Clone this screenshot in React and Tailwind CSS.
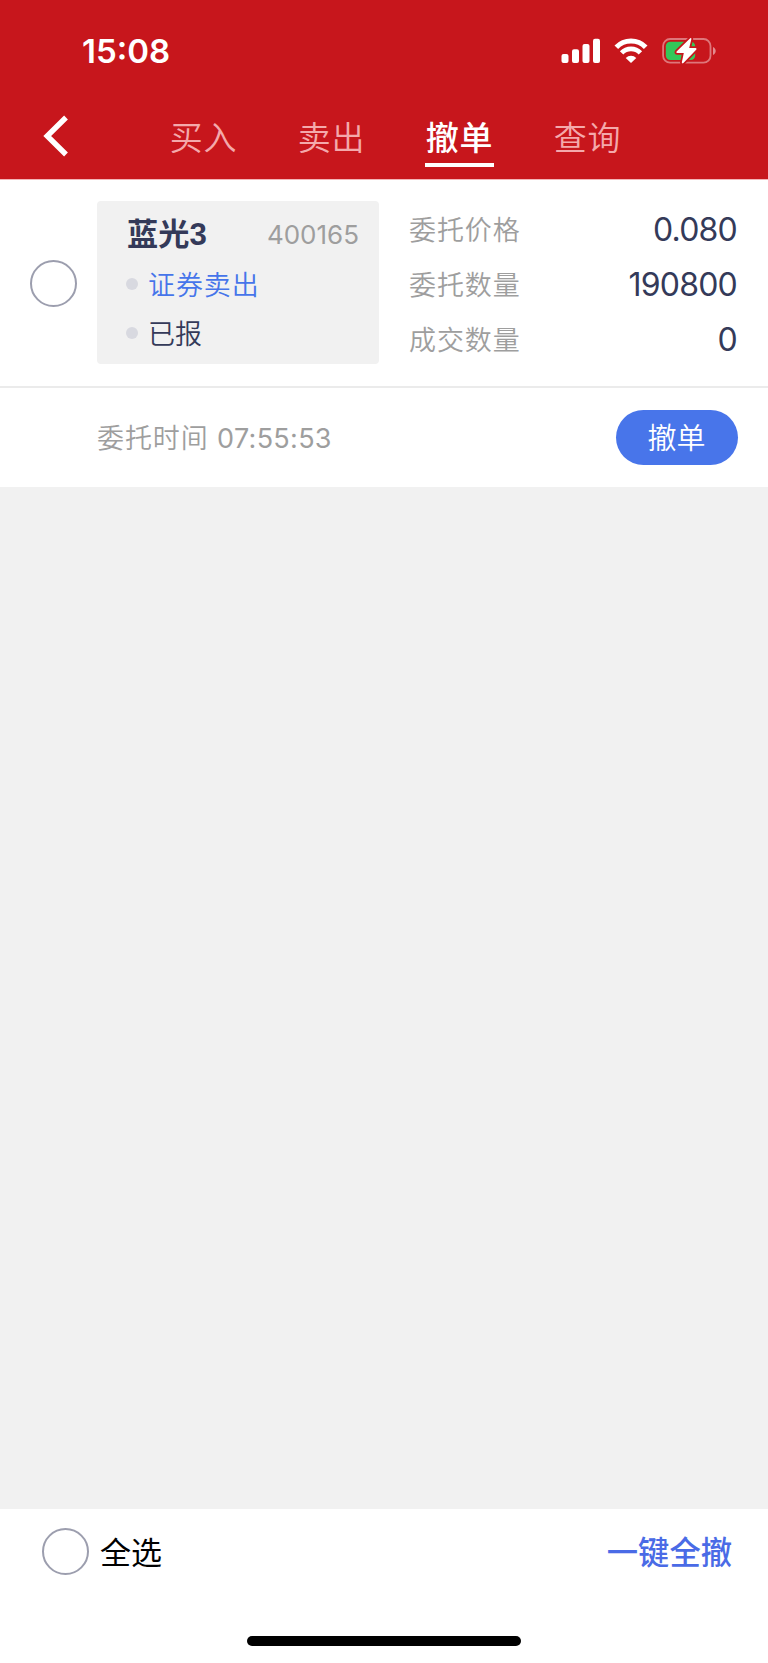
const tabs = [
  { id: 'buy', label: '买入' },
  { id: 'sell', label: '卖出' },
  { id: 'cancel', label: '撤单' },
  { id: 'query', label: '查询' },
]

const details = [
  { label: '委托价格', value: '0.080' },
  { label: '委托数量', value: '190800' },
  { label: '成交数量', value: '0' },
]

function SignalIcon() {
  return (
    <svg width="40" height="26" viewBox="0 0 40 26" fill="#fff">
      <rect x="0.5" y="16" width="7" height="9" rx="2" />
      <rect x="11" y="11.3" width="7" height="13.7" rx="2" />
      <rect x="21.5" y="6" width="7" height="19" rx="2" />
      <rect x="32" y="0.8" width="7" height="24.2" rx="2" />
    </svg>
  )
}

function WifiIcon() {
  return (
    <svg width="34" height="26" viewBox="0 0 34 26" fill="none">
      <path d="M2.3 9.3 A20.4 20.4 0 0 1 31.7 9.3" stroke="#fff" strokeWidth="5" />
      <path d="M7.6 14.8 A13 13 0 0 1 26.4 14.8" stroke="#fff" strokeWidth="4.8" />
      <path d="M17 25 L11.7 19.9 A7.8 7.8 0 0 1 22.3 19.9 Z" fill="#fff" />
    </svg>
  )
}

function BatteryIcon() {
  return (
    <svg width="55" height="30" viewBox="0 0 55 30" fill="none">
      <rect x="1.1" y="3" width="47.4" height="23.7" rx="7" stroke="#fff" strokeOpacity="0.42" strokeWidth="1.8" />
      <path d="M51 11 C54.6 12.4 54.6 17.6 51 19 Z" fill="#fff" fillOpacity="0.5" />
      <rect x="3.8" y="5.8" width="29.4" height="18.2" rx="4.4" fill="#34c759" />
      <path
        d="M28.2 2.2 L14.6 15.5 Q13.8 17 15.4 17 H21.8 L19.8 26.6 Q20.2 28 21.4 27 L34.4 13.6 Q35 12.2 33.6 12.1 H27.2 L29.4 3 Q29.4 1.6 28.2 2.2 Z"
        fill="#fff"
        stroke="#c7161c"
        strokeWidth="3.6"
        paintOrder="stroke"
      />
    </svg>
  )
}

function Radio() {
  return <span className="block size-[47px] rounded-full border-2 border-[#9c9eae] bg-white shrink-0" />
}

function StatusBar() {
  return (
    <div className="flex h-[95px] items-start justify-between pl-[82px] pr-[51px]">
      <span className="mt-[33px] text-[33px] leading-[36px] font-semibold text-white">15:08</span>
      <div className="mt-[36px] flex items-center">
        <SignalIcon />
        <span className="ml-[13px]"><WifiIcon /></span>
        <span className="ml-[14px]"><BatteryIcon /></span>
      </div>
    </div>
  )
}

function NavBar({ active }) {
  return (
    <div className="flex h-[84px]">
      <button className="ml-[43px] mt-[20px] h-[42px] w-[26px]">
        <svg width="26" height="42" viewBox="0 0 26 42" fill="none">
          <path d="M23 2.5 L4.2 21 L23 39.5" stroke="#fff" strokeWidth="5.4" />
        </svg>
      </button>
      <div className="ml-[100px] flex gap-[59px]">
        {tabs.map((tab) => (
          <button
            key={tab.id}
            className={`flex h-[72px] w-[69px] flex-col items-center pt-[21px] text-[33px] leading-[44px] tracking-[0.8px] ${
              tab.id === active
                ? 'border-b-4 border-white font-medium text-white'
                : 'font-[350] text-[#f4a9ab]'
            }`}
          >
            {tab.label}
          </button>
        ))}
      </div>
    </div>
  )
}

export default function App() {
  return (
    <div className="flex h-[1663px] w-[768px] flex-col overflow-hidden bg-[#f1f1f1] font-[Inter,'Noto_Sans_CJK_SC',sans-serif]">
      <header className="bg-[#c7161c]">
        <StatusBar />
        <NavBar active="cancel" />
      </header>

      <section className="h-[308px] border-t border-[#f3b5b7] bg-white">
        <div className="flex h-[208px] items-start border-b-2 border-[#ebebeb] pl-[30px] pr-[31px]">
          <div className="mt-[80px]"><Radio /></div>

          {/* Stock card */}
          <div className="ml-[20px] mt-[21px] h-[163px] w-[282px] rounded bg-[#f1f1f1] pl-[30px] pr-[20px] pt-[12px]">
            <div className="flex h-[44px] items-center justify-between">
              <span className="pt-px font-['Liberation_Sans','Noto_Sans_CJK_SC',sans-serif] text-[31.2px] font-bold text-[#343a59]">蓝光3</span>
              <span className="h-[44px] text-[26px] leading-[44px] text-[#9e9e9e]">400165</span>
            </div>
            <div className="-ml-px flex h-[54px] items-center gap-[10px]">
              <span className="size-3 rounded-full bg-[#d8d9e0]" />
              <span className="pt-[4px] text-[27px] font-[350] tracking-[0.9px] text-[#4675ea]">证券卖出</span>
            </div>
            <div className="-ml-px flex h-[44px] items-center gap-[10px]">
              <span className="size-3 rounded-full bg-[#d8d9e0]" />
              <span className="pt-[4px] text-[27px] font-[350] text-[#343a59]">已报</span>
            </div>
          </div>

          {/* Order details */}
          <div className="ml-[30px] mt-[21px] flex-1">
            {details.map((d) => (
              <div key={d.label} className="flex h-[55px] items-center justify-between">
                <span className="pt-[5px] text-[27px] font-[350] tracking-[0.9px] text-[#9e9e9e]">{d.label}</span>
                <span className="pt-[2px] text-[32px] tracking-[-0.8px] text-[#343a59]">{d.value}</span>
              </div>
            ))}
          </div>
        </div>

        <div className="flex h-[99px] items-center justify-between pl-[97px] pr-[30px]">
          <span className="pt-[3px] text-[27px] font-[350] tracking-[0.9px] text-[#9e9e9e]">
            委托时间 <span className="font-normal tracking-[0.3px]">07:55:53</span>
          </span>
          <button className="h-[55px] w-[122px] rounded-full bg-[#4875ea] pt-[3px] pr-[1px] text-[29px] font-[350] text-white">撤单</button>
        </div>
      </section>

      <main className="flex-1" />

      <footer className="flex h-[154px] flex-col items-center bg-white">
        <div className="flex h-[85px] w-full items-center justify-between pl-[42px] pr-[36px]">
          <label className="flex items-center gap-[11px] text-[31px] text-black">
            <Radio />
            <span className="pt-[4px]">全选</span>
          </label>
          <button className="pt-[4px] text-[31.3px] font-medium text-[#4a6be6]">一键全撤</button>
        </div>
        <div className="mt-[42px] h-[10px] w-[274px] rounded-full bg-black" />
      </footer>
    </div>
  )
}
